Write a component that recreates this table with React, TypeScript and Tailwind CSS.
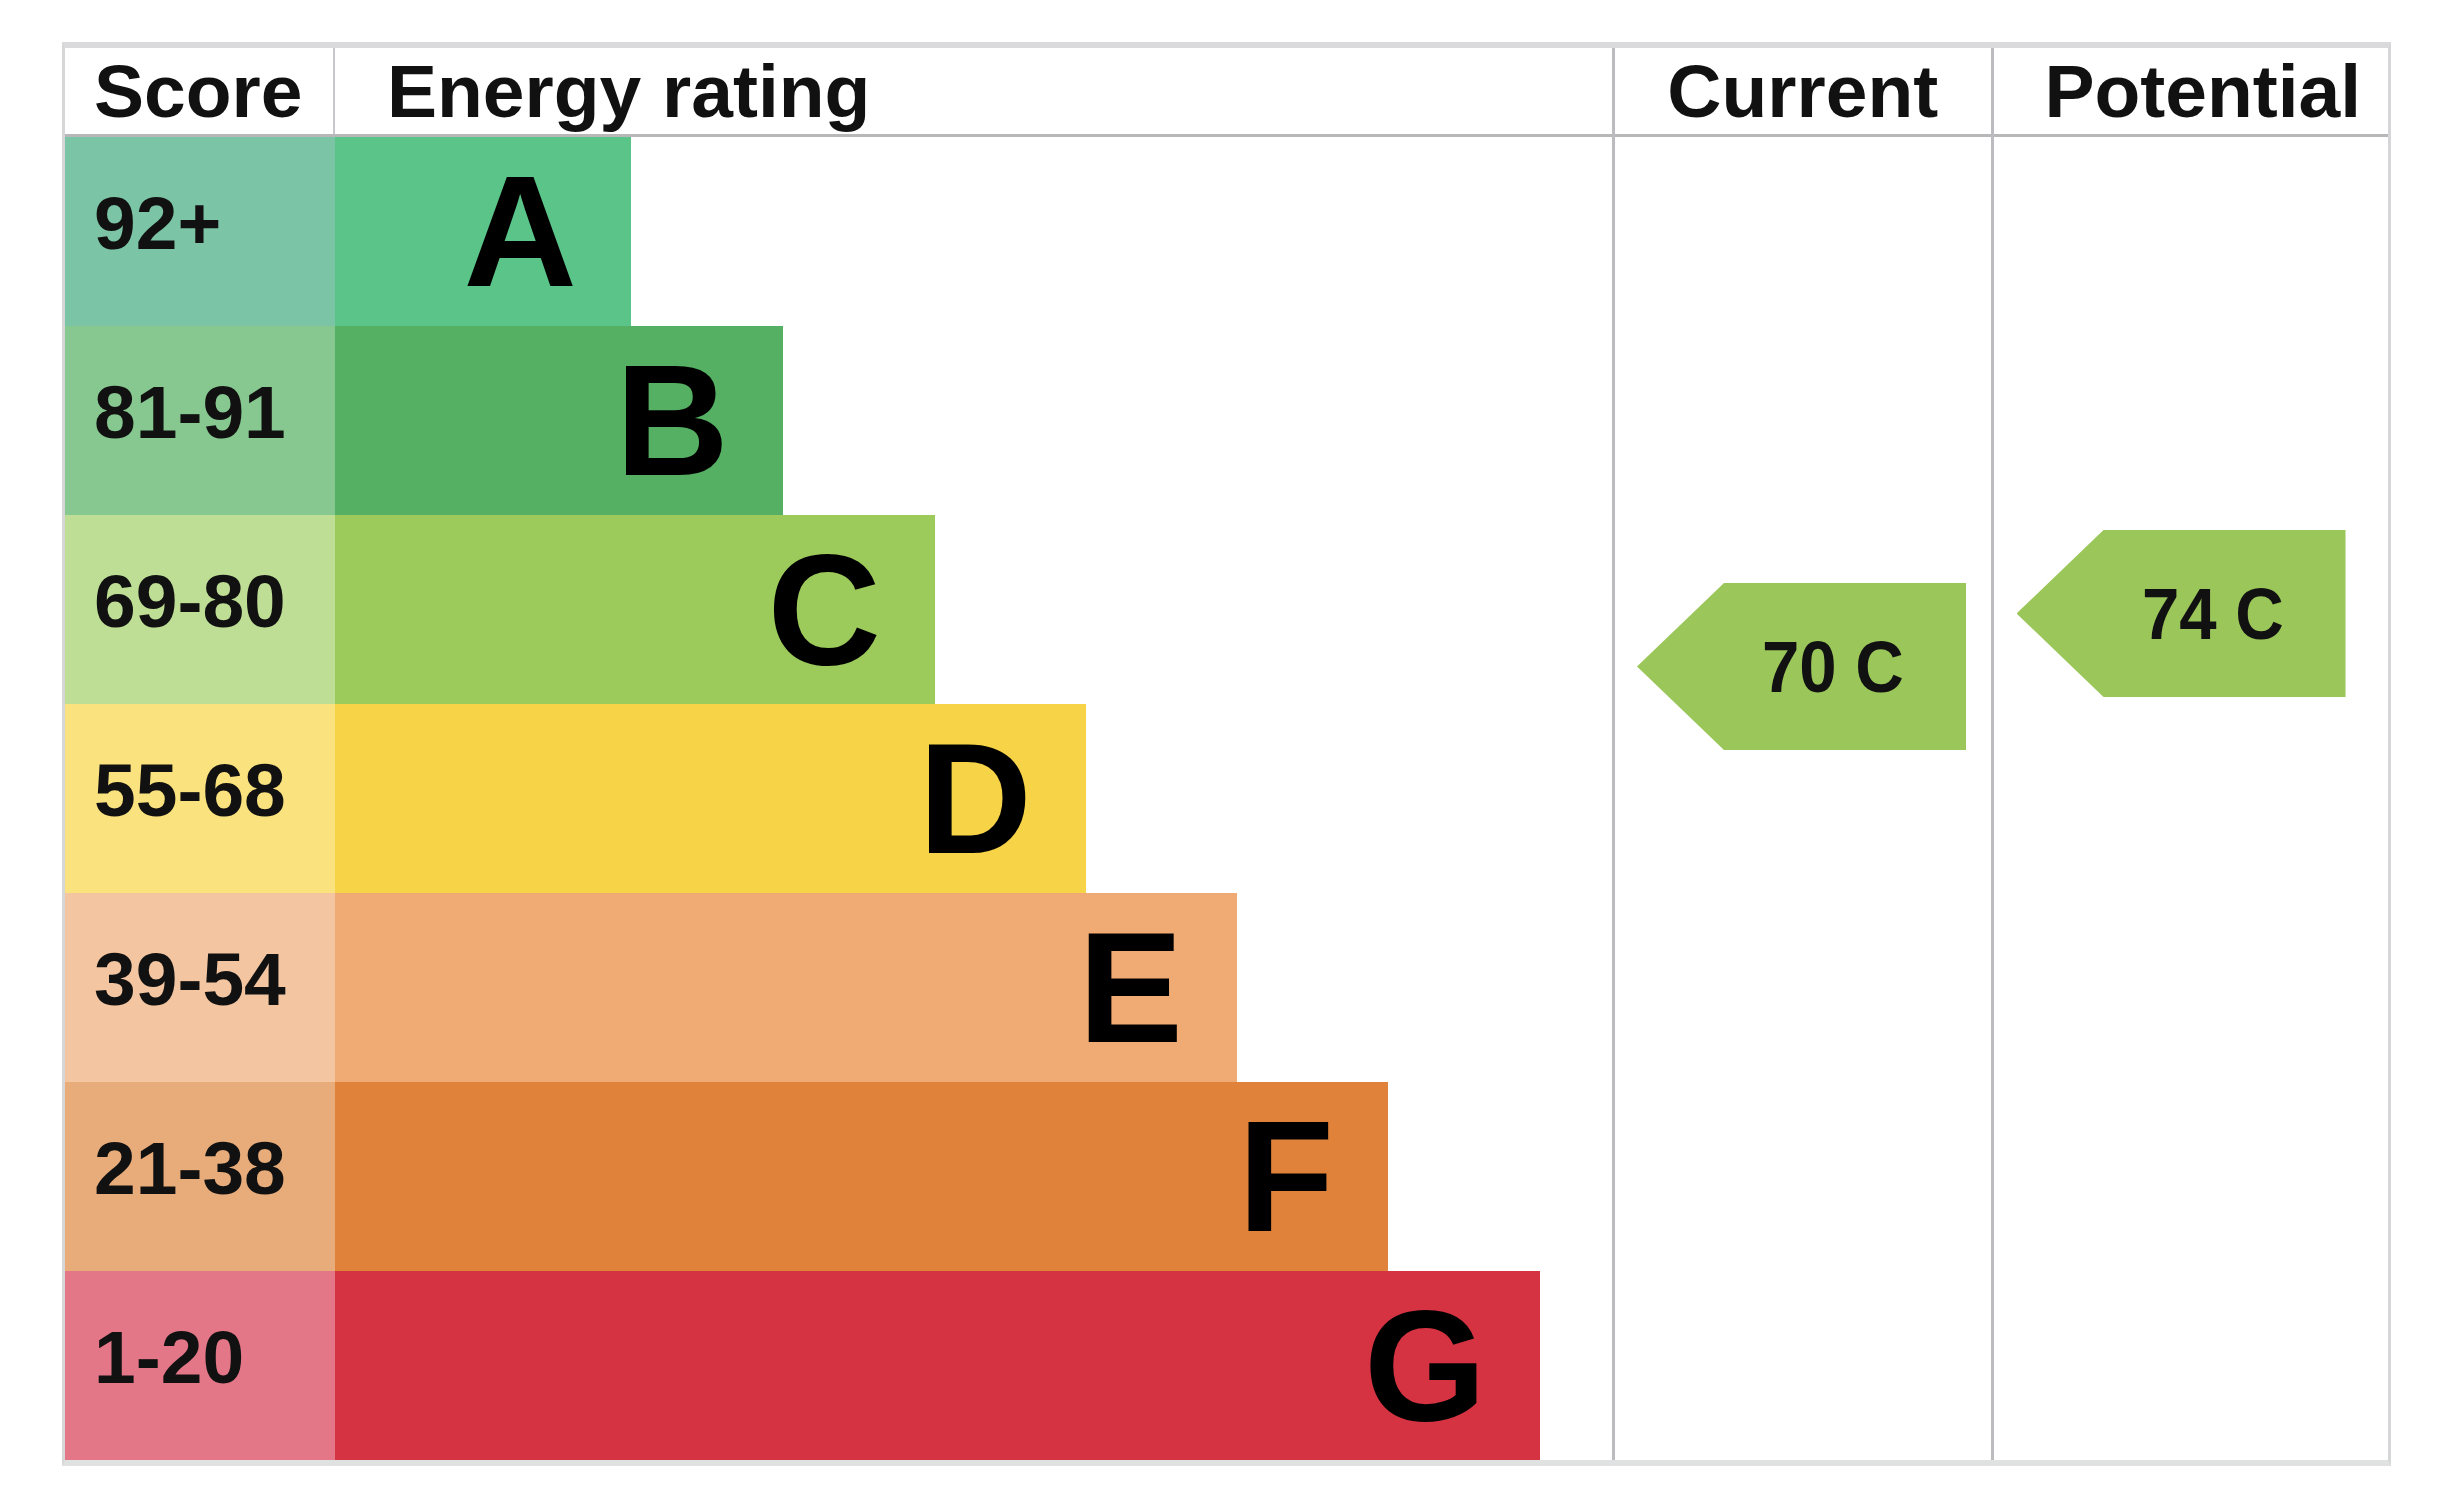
import React from "react";

type Row = {
  score: string;
  letter: string;
  cell: string;
  bar: string;
  width: number;
};

const rows: Row[] = [
  { score: "92+", letter: "A", cell: "bg-[#7bc4a5]", bar: "bg-[#5ac489]", width: 296 },
  { score: "81-91", letter: "B", cell: "bg-[#86c890]", bar: "bg-[#55b063]", width: 448 },
  { score: "69-80", letter: "C", cell: "bg-[#bedd95]", bar: "bg-[#9ccb5b]", width: 600 },
  { score: "55-68", letter: "D", cell: "bg-[#fae27e]", bar: "bg-[#f7d347]", width: 751 },
  { score: "39-54", letter: "E", cell: "bg-[#f3c6a1]", bar: "bg-[#efab73]", width: 902 },
  { score: "21-38", letter: "F", cell: "bg-[#e8ac7a]", bar: "bg-[#e0823a]", width: 1053 },
  { score: "1-20", letter: "G", cell: "bg-[#e37788]", bar: "bg-[#d63342]", width: 1205 },
];

const font = "font-['Liberation_Sans',Arial,sans-serif]";

function Arrow({ label }: { label: string }) {
  return (
    <div className="flex h-[167px] w-[329px] items-center bg-[#9bc65a] pl-[125px] [clip-path:polygon(87px_0,100%_0,100%_100%,87px_100%,0_50%)]">
      <span className="inline-block origin-left scale-x-[0.92] text-[73px] font-bold leading-none text-[#111]">
        {label}
      </span>
    </div>
  );
}

export default function App() {
  return (
    <div className={`min-h-screen bg-white pl-[62px] pt-[42px] ${font}`}>
      <div className="flex w-[2329px] border-x-[3px] border-t-[6px] border-b-[6px] border-x-[#d6d6d8] border-t-[#dadadc] border-b-[#e0e2e2]">
        {/* Score + Energy rating */}
        <div className="flex w-[1549px] flex-col">
          <div className="flex h-[89px] border-b-[3px] border-[#b8b8bb]">
            <div className="flex w-[270px] items-center border-r-2 border-[#c8c8cc] pl-[29px]">
              <span className="text-[75px] font-bold leading-none text-[#111]">Score</span>
            </div>
            <div className="flex flex-1 items-center pl-[52px]">
              <span className="text-[75px] font-bold leading-none text-[#111]">Energy rating</span>
            </div>
          </div>
          {rows.map((r) => (
            <div key={r.letter} className="flex h-[189px]">
              <div className={`flex w-[270px] items-center pb-[16px] pl-[29px] ${r.cell}`}>
                <span className="text-[75px] font-bold leading-none text-[#111]">{r.score}</span>
              </div>
              <div
                className={`flex items-center justify-end pr-[54px] ${r.bar}`}
                style={{ width: r.width }}
              >
                <span className="text-[157px] font-bold leading-none text-black">{r.letter}</span>
              </div>
            </div>
          ))}
        </div>

        {/* Current */}
        <div className="flex w-[379px] flex-col border-l-[3px] border-[#bcbcc0]">
          <div className="flex h-[89px] items-center justify-center border-b-[3px] border-[#b8b8bb]">
            <span className="text-[75px] font-bold leading-none text-[#111]">Current</span>
          </div>
          <div className="flex-1 pl-[22px] pt-[446px]">
            <Arrow label="70 C" />
          </div>
        </div>

        {/* Potential */}
        <div className="flex w-[398px] flex-col border-l-[3px] border-[#bcbcc0]">
          <div className="flex h-[89px] items-center justify-center border-b-[3px] border-[#b8b8bb] pl-[24px]">
            <span className="text-[75px] font-bold leading-none text-[#111]">Potential</span>
          </div>
          <div className="flex-1 pl-[23px] pt-[393px]">
            <Arrow label="74 C" />
          </div>
        </div>
      </div>
    </div>
  );
}
